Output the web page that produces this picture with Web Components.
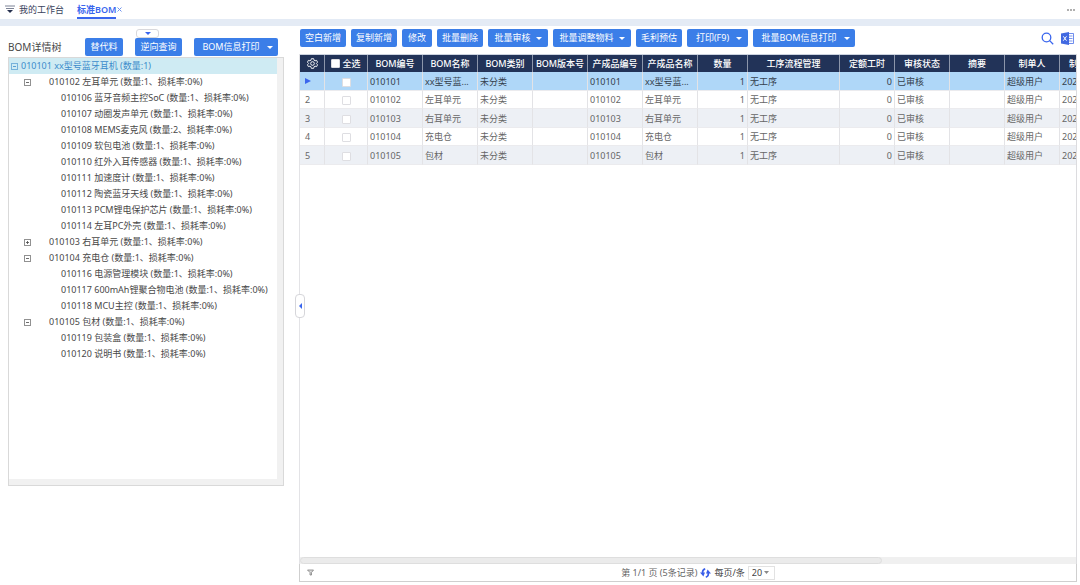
<!DOCTYPE html>
<html lang="zh-CN">
<head>
<meta charset="utf-8">
<title>标准BOM</title>
<style>
  html, body { height: 100%; margin: 0; }
  body {
    font: 9px/16px "Noto Sans", "Noto Sans CJK SC", sans-serif;
    color: #484848;
    background: #fff;
    --primary: #3b7ee8;
    --accent: #3a66ee;
    --head: #223358;
    --line: #e3e3e6;
  }
</style>
</head>
<body>
<bom-app></bom-app>
<script>
const define = (name, html, setup) => {
  const template = document.createElement('template');
  template.innerHTML = html;
  customElements.define(name, class extends HTMLElement {
    constructor() {
      super();
      this.attachShadow({ mode: 'open' }).append(template.content.cloneNode(true));
    }
    connectedCallback() {
      if (setup && !this.ready) { this.ready = true; setup(this, this.shadowRoot); }
    }
  });
};

define('tool-button', `
  <style>
    :host { display: block; flex: none; }
    button {
      display: flex; align-items: center; justify-content: center; gap: 5px;
      height: 18px; width: 100%; padding: 0 6px; margin: 0; border: 0; border-radius: 2px;
      background: var(--primary); color: #fff; font: inherit; line-height: 18px; white-space: nowrap;
    }
    i { display: none; border: 3px solid transparent; border-top-color: #fff; border-bottom: 0; }
    :host([menu]) i { display: block; }
    :host([wide]) button { padding: 0 6px 0 9px; gap: 7px; }
  </style>
  <button type="button"><slot></slot><i></i></button>`);

define('app-tabs', `
  <style>
    :host { display: block; border-bottom: 7px solid #e4ebf5; }
    nav { display: flex; align-items: center; height: 19px; padding: 0 4px 0 5px; color: #39425c; }
    svg { display: block; flex: none; }
    a { color: inherit; text-decoration: none; line-height: 19px; }
    .home { margin: 0 13px 0 4px; }
    .active { color: var(--accent); font-weight: 600; box-shadow: inset 0 -2px var(--accent); }
    button { border: 0; padding: 0; background: none; display: block; }
    .more { margin-left: auto; }
  </style>
  <nav>
    <svg width="10" height="9" viewBox="0 0 10 9"><path d="M0 1h10M1 3.500h8" stroke="#7d8396" stroke-width="1"/><path d="M2 5h6L5 8z" fill="#26304e"/></svg>
    <a class="home" href="#home">我的工作台</a>
    <a class="active" href="#bom">标准BOM</a>
    <button type="button" aria-label="关闭"><svg width="7" height="7" viewBox="0 0 7 7"><path d="M1.500 1.500l4 4M5.500 1.500l-4 4" stroke="#6f93ee" fill="none"/></svg></button>
    <button class="more" type="button" aria-label="更多"><svg width="9" height="4" viewBox="0 0 9 4" fill="#b0b0b0"><path d="M0 1h2v2H0zM3 1h2v2H3zM6 1h2v2H6z"/></svg></button>
  </nav>`);

define('tree-node', `
  <style>
    :host { display: block; }
    .row { display: flex; align-items: center; height: 16px; line-height: 18px; white-space: nowrap; padding-left: 52px; }
    :host([level="0"]) .row { padding-left: 2px; gap: 3px; background: #cfebf3; color: #3c8ccb; }
    :host([level="1"]) .row { padding-left: 15px; gap: 18px; }
    button { display: none; padding: 0; border: 0; background: none; color: inherit; }
    :host([state]) button { display: block; }
    svg { display: block; }
    .plus { display: none; }
    :host([state="closed"]) .plus { display: block; }
  </style>
  <div class="row" role="treeitem">
    <button type="button" aria-label="展开或收起"><svg width="7" height="7" viewBox="0 0 7 7" fill="none" stroke="currentColor"><rect x=".5" y=".5" width="6" height="6" stroke-opacity=".6"/><path d="M2 3.500h3" stroke-opacity=".8"/><path class="plus" d="M3.500 2v3" stroke-opacity=".8"/></svg></button>
    <span></span>
  </div>
  <slot></slot>`, (el, root) => { root.querySelector('span').textContent = el.getAttribute('text'); });

define('bom-tree', `
  <style>
    :host { display: block; position: relative; padding: 12px 15px 0 8px; }
    header { display: flex; align-items: center; padding-right: 6px; }
    h2 { margin: 0 auto 0 0; font: inherit; font-size: 10px; }
    .b1 { width: 38px; } .b2 { width: 47px; margin: 0 12px; } .b3 { width: 84px; }
    .fold {
      position: absolute; left: 136px; top: 3px; width: 23px; height: 9px; padding: 0;
      display: flex; align-items: center; justify-content: center;
      border: 1px solid #d8d8dc; border-radius: 3px; background: #fff;
    }
    .fold i { border: 3px solid transparent; border-top-color: var(--accent); border-bottom: 0; }
    .box {
      box-sizing: border-box; height: 429px; margin-top: 1px; border: 1px solid #d9d9d9;
      display: grid; grid-template: 1fr 6px / 1fr 6px; background: #f1f1f1;
    }
    .list { background: #fff; overflow: hidden; }
  </style>
  <button class="fold" type="button" aria-label="收起"><i></i></button>
  <header>
    <h2>BOM详情树</h2>
    <tool-button class="b1">替代料</tool-button>
    <tool-button class="b2">逆向查询</tool-button>
    <tool-button class="b3" menu wide>BOM信息打印</tool-button>
  </header>
  <div class="box"><div class="list" role="tree">
    <tree-node level="0" state="open" text="010101 xx型号蓝牙耳机 (数量:1)">
      <tree-node level="1" state="open" text="010102 左耳单元 (数量:1、损耗率:0%)">
        <tree-node text="010106 蓝牙音频主控SoC (数量:1、损耗率:0%)"></tree-node>
        <tree-node text="010107 动圈发声单元 (数量:1、损耗率:0%)"></tree-node>
        <tree-node text="010108 MEMS麦克风 (数量:2、损耗率:0%)"></tree-node>
        <tree-node text="010109 软包电池 (数量:1、损耗率:0%)"></tree-node>
        <tree-node text="010110 红外入耳传感器 (数量:1、损耗率:0%)"></tree-node>
        <tree-node text="010111 加速度计 (数量:1、损耗率:0%)"></tree-node>
        <tree-node text="010112 陶瓷蓝牙天线 (数量:1、损耗率:0%)"></tree-node>
        <tree-node text="010113 PCM锂电保护芯片 (数量:1、损耗率:0%)"></tree-node>
        <tree-node text="010114 左耳PC外壳 (数量:1、损耗率:0%)"></tree-node>
      </tree-node>
      <tree-node level="1" state="closed" text="010103 右耳单元 (数量:1、损耗率:0%)"></tree-node>
      <tree-node level="1" state="open" text="010104 充电仓 (数量:1、损耗率:0%)">
        <tree-node text="010116 电源管理模块 (数量:1、损耗率:0%)"></tree-node>
        <tree-node text="010117 600mAh锂聚合物电池 (数量:1、损耗率:0%)"></tree-node>
        <tree-node text="010118 MCU主控 (数量:1、损耗率:0%)"></tree-node>
      </tree-node>
      <tree-node level="1" state="open" text="010105 包材 (数量:1、损耗率:0%)">
        <tree-node text="010119 包装盒 (数量:1、损耗率:0%)"></tree-node>
        <tree-node text="010120 说明书 (数量:1、损耗率:0%)"></tree-node>
      </tree-node>
    </tree-node>
  </div></div>`);

define('bom-toolbar', `
  <style>
    :host { display: flex; align-items: center; gap: 5px; padding: 3px 3px 7px 0; }
    .w4 { width: 46px; } .w2 { width: 30px; } .m4 { width: 60px; }
    .m6 { width: 78px; } .mp { width: 61px; } .m8 { width: 102px; }
    .icon { border: 0; padding: 0; background: none; flex: none; }
    .find { margin: 0 2px 0 auto; }
    svg { display: block; }
  </style>
  <tool-button class="w4">空白新增</tool-button>
  <tool-button class="w4">复制新增</tool-button>
  <tool-button class="w2">修改</tool-button>
  <tool-button class="w4">批量删除</tool-button>
  <tool-button class="m4" menu>批量审核</tool-button>
  <tool-button class="m6" menu>批量调整物料</tool-button>
  <tool-button class="w4">毛利预估</tool-button>
  <tool-button class="mp" menu wide>打印(F9)</tool-button>
  <tool-button class="m8" menu wide>批量BOM信息打印</tool-button>
  <button class="icon find" type="button" aria-label="搜索"><svg width="13" height="13" viewBox="0 0 13 13" fill="none" stroke="#3a66ee" stroke-width="1.300"><circle cx="5.500" cy="5.500" r="4.300"/><path d="M8.600 8.600l3.600 3.600"/></svg></button>
  <button class="icon" type="button" aria-label="导出Excel"><svg width="13" height="13" viewBox="0 0 13 13"><path d="M7 1.500h5.500v10H7" fill="#fff" stroke="#4a70e8" stroke-width=".8"/><path d="M8 4h3.500M8 6.500h3.500M8 9h3.500" stroke="#7d98ee" stroke-width="1.200"/><path d="M0 1.500L8 0v13L0 11.500z" fill="#4169e1"/><path d="M2.300 4.300l3.200 4.400M5.500 4.300L2.300 8.700" stroke="#fff" stroke-width="1"/></svg></button>`);

define('bom-grid', `
  <style>
    :host { display: flex; flex-direction: column; flex: 1; min-height: 0; border-right: 1px solid #dcdcdf; }
    .view { flex: 1; min-height: 0; overflow: hidden; border-top: 1px solid #ccd3df; }
    table { table-layout: fixed; border-collapse: separate; border-spacing: 0; width: 815px; }
    th, td { box-sizing: border-box; padding: 0 2px; border-right: 1px solid var(--line); overflow: hidden; white-space: nowrap; text-align: left; font-weight: 400; }
    thead th { height: 17px; line-height: 17px; padding: 0; background: var(--head); color: #fff; text-align: center; font-weight: 500; border-color: #8c96aa; }
    td, tbody th { height: 18px; line-height: 17px; color: #666; border-bottom: 1px solid #ebebee; }
    tbody tr:nth-child(odd) > * { height: 19px; background: #edf0f5; }
    tbody tr:first-child > * { background: #afd7f8; color: #34404c; }
    tbody th { padding-left: 5px; }
    td.num { text-align: right; }
    td.check { text-align: center; }
    input { appearance: none; display: inline-block; box-sizing: border-box; width: 9px; height: 9px; margin: 0; border: 1px solid #dedee2; border-radius: 1px; background: #fff; vertical-align: middle; }
    label { display: flex; align-items: center; justify-content: center; gap: 2px; }
    svg { display: block; }
    thead svg { margin: auto; }
    .bar { height: 7px; background: #f0f0f0; }
    .bar div { box-sizing: border-box; width: 75%; height: 7px; border: 1px solid #dedede; border-radius: 4px; background: #ebebeb; }
  </style>
  <div class="view"><table>
    <colgroup></colgroup><thead><tr></tr></thead><tbody></tbody>
  </table></div>
  <div class="bar"><div></div></div>`, (el, root) => {
  const widths = [25, 43, 55, 55, 55, 55, 55, 55, 50, 92, 55, 55, 55, 55, 55];
  const gear = '<svg width="11" height="11" viewBox="0 0 24 24" fill="none" stroke="#fff" stroke-width="2" aria-label="设置"><path d="M9.500 1.500h5l1 3.500 2 1.200 3.500-1 2 4-2.500 2.800 2.500 2.800-2 4-3.500-1-2 1.200-1 3.500h-5l-1-3.500-2-1.200-3.500 1-2-4L3.500 12 1 9.200l2-4 3.500 1 2-1.200z"/><circle cx="12" cy="12" r="4"/></svg>';
  const heads = [gear, '<label><input type="checkbox">全选</label>', 'BOM编号', 'BOM名称', 'BOM类别', 'BOM版本号', '产成品编号', '产成品名称', '数量', '工序流程管理', '定额工时', '审核状态', '摘要', '制单人', '制单时间'];
  const rows = [['010101', 'xx型号蓝...'], ['010102', '左耳单元'], ['010103', '右耳单元'], ['010104', '充电仓'], ['010105', '包材']];
  const mark = '<svg width="6" height="6" viewBox="0 0 6 6"><path d="M0 0l6 3-6 3z" fill="#3a66ee"/></svg>';
  root.querySelector('colgroup').innerHTML = widths.map(w => `<col style="width:${w}px">`).join('');
  root.querySelector('thead tr').innerHTML = heads.map(h => `<th scope="col">${h}</th>`).join('');
  root.querySelector('tbody').innerHTML = rows.map(([code, name], i) => `<tr>
    <th scope="row">${i ? i + 1 : mark}</th><td class="check"><input type="checkbox" aria-label="选择 ${code}"></td>
    <td>${code}</td><td>${name}</td><td>未分类</td><td></td><td>${code}</td><td>${name}</td>
    <td class="num">1</td><td>无工序</td><td class="num">0</td><td>已审核</td><td></td><td>超级用户</td><td>2023</td></tr>`).join('');
});

define('bom-pager', `
  <style>
    :host { display: flex; align-items: center; height: 17px; border: 1px solid #cfcfcf; border-top: 0; color: #666; }
    svg { display: block; flex: none; }
    .filter { border: 0; background: none; padding: 0 0 0 7px; width: 20px; }
    .pages { flex: 1; display: flex; align-items: center; justify-content: center; gap: 3px; }
    .reload { border: 0; background: none; padding: 0; }
    label { display: flex; align-items: center; gap: 3px; color: #444; }
    .pick { display: grid; align-items: center; }
    .pick > * { grid-area: 1 / 1; }
    .pick svg { justify-self: end; margin-right: 6px; pointer-events: none; }
    select { appearance: none; box-sizing: border-box; width: 27px; height: 14px; margin: 0; padding: 0 0 0 3px; border: 1px solid #e2e2e2; border-radius: 0; background: #fff; color: #444; font: inherit; line-height: 12px; }
  </style>
  <button class="filter" type="button" aria-label="筛选"><svg width="7" height="7" viewBox="0 0 7 7"><path d="M.5 1h6L4.500 3.500V6h-1.500V3.500z" fill="#ddd" stroke="#808080" stroke-width=".8"/></svg></button>
  <div class="pages">
    <span>第 1/1 页 (5条记录)</span>
    <button class="reload" type="button" aria-label="刷新"><svg width="11" height="10" viewBox="0 0 11 10" fill="none" stroke="#3a5ee8" stroke-width="1.800"><path d="M5.200 .9C3 1.500 2.300 3 2.700 5.500M5.800 9.100C8 8.500 8.700 7 8.300 4.500"/><path d="M0 4.600h5L3.400 8.600zM11 5.400H6l1.600-4z" fill="#3a5ee8" stroke="none"/></svg></button>
    <label>每页/条 <span class="pick"><select><option>20</option><option>50</option></select><svg width="5" height="3" viewBox="0 0 5 3"><path d="M0 0h5L2.500 3z" fill="#888"/></svg></span></label>
  </div>`);

define('bom-app', `
  <style>
    :host { display: flex; flex-direction: column; height: 100vh; }
    main { flex: 1; min-height: 0; display: grid; grid-template-columns: 299px minmax(0, 1fr); }
    section { position: relative; display: flex; flex-direction: column; min-width: 0; min-height: 0; margin: 0 3px 3px 0; }
    bom-grid { border-left: 1px solid var(--line); }
    .split {
      position: absolute; left: -4px; top: 268px; width: 10px; height: 24px; padding: 0;
      display: flex; align-items: center; justify-content: center;
      border: 1px solid #d6d6da; border-radius: 4px; background: #fff;
    }
    .split i { border: 3px solid transparent; border-right-color: var(--accent); border-left: 0; }
    bom-toolbar { margin-left: 1px; }
  </style>
  <app-tabs></app-tabs>
  <main>
    <bom-tree></bom-tree>
    <section>
      <bom-toolbar></bom-toolbar>
      <bom-grid></bom-grid>
      <bom-pager></bom-pager>
      <button class="split" type="button" aria-label="收起左栏"><i></i></button>
    </section>
  </main>`);
</script>
</body>
</html>
